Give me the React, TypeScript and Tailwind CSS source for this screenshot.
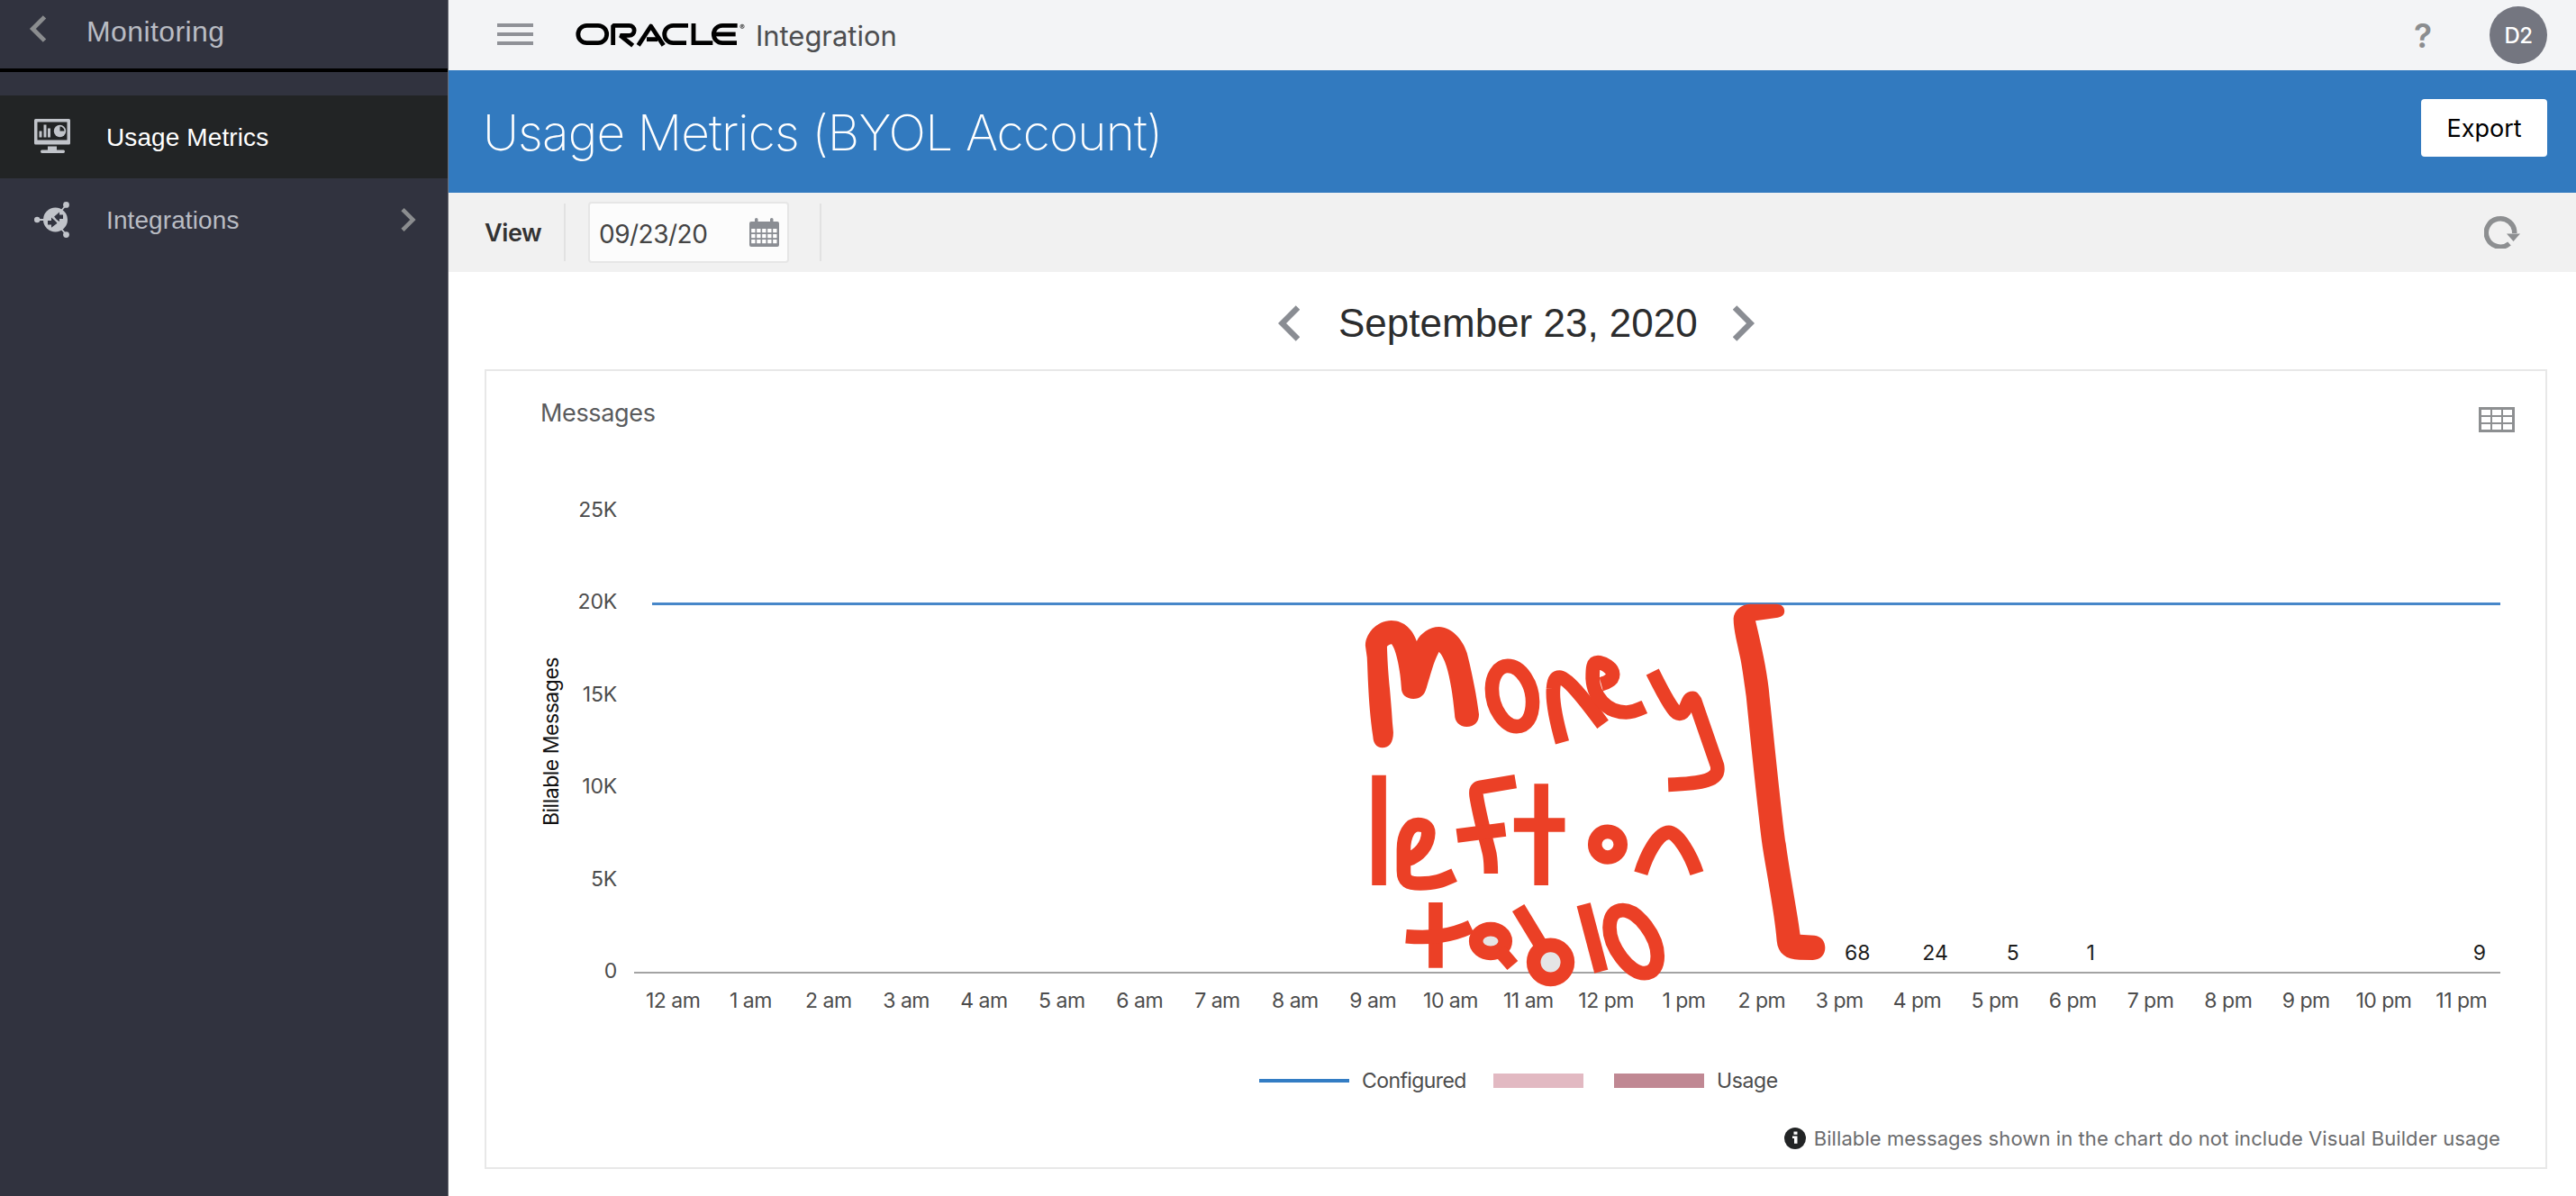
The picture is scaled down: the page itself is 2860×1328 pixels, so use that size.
import React from "react";

const sans = "font-['Inter','Liberation_Sans',sans-serif]";
const helv = "font-['Liberation_Sans',Arial,sans-serif]";

const hours = [
  "12 am", "1 am", "2 am", "3 am", "4 am", "5 am", "6 am", "7 am", "8 am", "9 am", "10 am", "11 am",
  "12 pm", "1 pm", "2 pm", "3 pm", "4 pm", "5 pm", "6 pm", "7 pm", "8 pm", "9 pm", "10 pm", "11 pm",
];
const usage: Record<string, number> = { "3 pm": 68, "4 pm": 24, "5 pm": 5, "6 pm": 1, "11 pm": 9 };
const ticks = ["25K", "20K", "15K", "10K", "5K", "0"];

function Chevron({ dir, className, w }: { dir: "left" | "right"; className: string; w: number }) {
  return (
    <svg viewBox="0 0 24 40" fill="none" stroke="currentColor" strokeWidth={w} className={className}>
      <path d={dir === "left" ? "M22 2.5 L4.5 20 L22 37.5" : "M2 2.5 L19.5 20 L2 37.5"} />
    </svg>
  );
}

function MonitorIcon() {
  return (
    <svg viewBox="0 0 40 40" className="h-10 w-10" fill="#c1c4ca">
      <path fillRule="evenodd" d="M1.500 0 H38.500 Q40 0 40 1.500 V27 Q40 28.500 38.500 28.500 H1.500 Q0 28.500 0 27 V1.500 Q0 0 1.500 0Z M3.500 3.500 V23.500 H36.500 V3.500Z" />
      <path d="M5.500 13.500h3v7h-3z M10.500 6.500h3v14h-3z M15 10.500h3v10h-3z" />
      <circle cx="28.500" cy="13.500" r="6.700" />
      <path d="M28.500 13.500 V8.500 A5 5 0 0 1 33.500 13.500Z" fill="#222425" />
      <path d="M15 30.500h10v4h7.500q1.500 0 1.500 1.750t-1.500 1.750h-24q-1.500 0-1.500-1.750t1.500-1.750h6.500z" />
    </svg>
  );
}

function IntegrationIcon() {
  return (
    <svg viewBox="0 0 40 40" className="h-10 w-10" fill="#c1c4ca">
      <path d="M3 20H12 M30 10L35.500 3.500 M30 30L35.500 36.500" stroke="#c1c4ca" strokeWidth="1.800" />
      <circle cx="3.200" cy="20" r="3.200" />
      <circle cx="35.500" cy="3.400" r="3.400" />
      <circle cx="35.500" cy="36.600" r="3.400" />
      <circle cx="23.500" cy="20" r="13.500" />
      <path d="M21 17.500L28 11.500V14.500H32V19H28V22L21 17.500Z M26 23.500L19 17.500V21H15V25.500H19V28.800Z" fill="#31333f" />
      <path d="M20.500 15.500L27 24.500" stroke="#c1c4ca" strokeWidth="1.600" />
    </svg>
  );
}

function OracleLogo() {
  return (
    <svg viewBox="0 0 630 180" className="h-[60px] w-[210px]" fill="none" stroke="#000" strokeWidth="14.500" role="img" aria-label="Oracle">
      <rect x="35.500" y="55" width="95.500" height="58" rx="29" />
      <path d="M152 120 V55 H206 A16.500 16.500 0 0 1 206 88 H176 L218 122" strokeLinejoin="bevel" />
      <path d="M236 121 L278 57 L320 121" strokeLinejoin="round" />
      <path d="M264 101 H300" />
      <path d="M402 55 H352 A29 29 0 0 0 352 113 H396" />
      <path d="M420 48 V113 H484" />
      <path d="M566 55 H516 A29 29 0 0 0 516 113 H564" />
      <path d="M492 84 H560" />
      <circle cx="582" cy="58" r="6.500" strokeWidth="1.800" />
      <path d="M580 62 V54.500 H583.500 V58 H580 M582.500 58L585 62" strokeWidth="1.500" />
    </svg>
  );
}

function CalendarIcon() {
  return (
    <svg viewBox="0 0 33 32" className="h-8 w-[33px]">
      <path d="M6 1.500Q6 0 7.750 0T9.500 1.500V4H23V1.500Q23 0 24.750 0T26.500 1.500V4H31Q33 4 33 6V30Q33 32 31 32H2Q0 32 0 30V6Q0 4 2 4H6Z" fill="#8a8d93" />
      {[12, 18, 24].map((y) =>
        [2.2, 8.2, 14.2, 20.2, 26.2].map((x) => <rect key={`${x}-${y}`} x={x} y={y} width="4.300" height="4.200" fill="#fff" />)
      )}
    </svg>
  );
}

function RefreshIcon() {
  return (
    <svg viewBox="0 0 40 37" className="h-[37px] w-10">
      <path d="M28 31.500 A15.700 15.700 0 1 1 33.700 20" fill="none" stroke="#8d8f91" strokeWidth="5.500" />
      <path d="M25 20.500H40L32.500 29Z" fill="#8d8f91" />
    </svg>
  );
}

function TableIcon() {
  return (
    <svg viewBox="0 0 40 28" className="mt-4 h-7 w-10">
      <path fill="#8d8f91" d="M0 0H40V28H0Z" />
      {[3, 11, 19].map((y) =>
        [3, 15, 27].map((x) => <rect key={`${x}-${y}`} x={x} y={y} width="10" height="6" fill="#fff" />)
      )}
    </svg>
  );
}

function Sidebar() {
  return (
    <aside className={`flex h-full w-[498px] shrink-0 flex-col border-r border-[#6b6d76] bg-[#31333f] ${helv}`}>
      <div className="flex h-[80px] items-start border-b-4 border-black pl-8">
        <Chevron dir="left" w={6.5} className="mt-[17px] h-[30px] w-[20px] text-[#8b8d8f]" />
        <span className="ml-[44px] text-[32px] leading-[70px] tracking-[0.400px] text-[#b9bcc3]">Monitoring</span>
      </div>
      <div className="mt-[26px] flex h-[92px] items-center bg-[#222425] pl-[38px]">
        <MonitorIcon />
        <span className="ml-[40px] pt-0.5 text-[28px] tracking-[0.100px] text-white">Usage Metrics</span>
      </div>
      <div className="flex h-[92px] items-center pl-[38px]">
        <IntegrationIcon />
        <span className="ml-[40px] pt-0.5 text-[28px] tracking-[0.100px] text-[#b9bcc3]">Integrations</span>
        <Chevron dir="right" w={7} className="ml-auto mr-[35px] h-[26px] w-[17px] text-[#8b8d8f]" />
      </div>
    </aside>
  );
}

function Header() {
  return (
    <header className="flex h-[78px] items-center bg-[#f3f4f6]">
      <div className="ml-[54px] flex w-10 flex-col gap-[6px] pb-[2px]">
        <i className="h-1 bg-[#8f9197]" />
        <i className="h-1 bg-[#8f9197]" />
        <i className="h-1 bg-[#8f9197]" />
      </div>
      <div className="ml-[38px] pt-px"><OracleLogo /></div>
      <span className="ml-[-1px] pt-[3px] text-[31px] tracking-[-0.040px] text-[#4d4e50]">Integration</span>
      <span className="ml-auto pt-px text-[37px] font-semibold leading-none text-[#8b8d8f]">?</span>
      <span className="ml-[64px] mr-8 flex h-16 w-16 items-center justify-center rounded-full bg-[#747680] pt-0.5 text-[24px] font-medium tracking-[-0.500px] text-white">D2</span>
    </header>
  );
}

function TitleBar() {
  return (
    <div className="flex h-[136px] items-start justify-between bg-[#327abf] pl-[38px] pr-8">
      <h1 className="pt-px text-[55px] font-extralight leading-[136px] tracking-[-0.870px] text-white">Usage Metrics (BYOL Account)</h1>
      <button className="mt-8 h-16 w-[140px] rounded bg-white pt-0.5 text-center text-[27px] text-black">Export</button>
    </div>
  );
}

function Toolbar() {
  return (
    <div className="flex h-[88px] items-center bg-[#f1f1f1] pl-[40px]">
      <span className="w-[88px] pt-0.5 text-[27px] font-semibold tracking-[-0.400px] text-[#333]">View</span>
      <i className="h-16 w-0.5 bg-[#e2e2e2]" />
      <div className="ml-[25px] flex h-[68px] w-[223px] items-center justify-between rounded border-2 border-[#e6e6e6] bg-[#fcfcfc] pl-[10px] pr-[9px]">
        <span className="pt-1 text-[28px] tracking-[-0.500px] text-[#444]">09/23/20</span>
        <CalendarIcon />
      </div>
      <i className="ml-[34px] h-16 w-0.5 bg-[#e2e2e2]" />
      <span className="ml-auto mr-[62px] pb-px"><RefreshIcon /></span>
    </div>
  );
}

/* Freehand marker annotation drawn over the chart */
function Annotation() {
  return (
    <svg
      viewBox="0 0 1568 1380"
      preserveAspectRatio="none"
      className="pointer-events-none absolute left-[940px] top-[146px] h-[460px] w-[580px] overflow-visible"
      fill="none"
      stroke="#eb4026"
      strokeWidth="15.600"
      strokeLinejoin="round"
    >
      <g fill="#eb4026" stroke="none">
        <path d="M97 200C97 160 132 117 175 117C215 117 240 150 251 186C262 160 290 138 318 138C355 138 390 180 402 225C415 280 430 360 438 430C438 455 425 471 401 471C380 471 365 455 365 430C358 350 345 250 318 221C300 260 295 290 280 343C275 365 262 378 241 378C220 378 205 365 205 340C203 290 190 215 176 196C172 196 162 200 162 206C165 300 170 330 176 420Q178 460 181 490C181 525 168 541 148 541C130 541 121 525 120 505C105 390 105 300 102 240Z" />
        <path d="M1202 110C1203 85 1225 63 1250 62L1330 62C1348 62 1355 75 1355 85C1355 98 1348 105 1335 107L1268 118C1290 220 1305 300 1310 370C1320 470 1345 750 1359 860C1370 950 1392 1080 1402 1163L1445 1166C1465 1168 1477 1185 1477 1207C1477 1230 1465 1247 1440 1248L1400 1247C1360 1247 1335 1225 1332 1185C1325 1090 1300 950 1289 870C1275 750 1250 480 1240 370C1235 330 1228 270 1222 240C1215 200 1202 150 1202 110Z" />
      </g>
      <g fill="#e5e5e5" stroke="none">
        <ellipse cx="473" cy="1185" rx="30" ry="24" />
        <ellipse cx="653" cy="1255" rx="40" ry="45" />
      </g>
      <g>
        {[
          "M477 345C477 305 495 268 524 268C565 268 599 330 599 388C599 440 580 470 551 470C515 470 477 410 477 345Z",
          "M688 523C672 460 658 390 661 345C662 320 668 306 680 306C700 306 745 365 810 463",
          "M805 329C825 323 840 312 840 296C840 276 812 257 795 257C780 257 779 275 779 310C782 370 820 423 880 423C900 423 915 415 935 405",
          "M959 288C980 335 1000 380 1020 410C1035 435 1050 432 1060 405C1066 390 1068 376 1080 376L1086 385L1153 600C1162 650 1110 660 1006 664",
          "M138 632V999",
          "M222 914C260 900 285 865 286 825C286 805 273 797 255 797C230 797 212 830 212 880V950C212 985 225 993 262 993C305 993 325 985 364 965",
          "M548 653L440 673C432 676 428 684 430 700C440 770 458 840 470 895C474 920 474 940 474 960",
          "M372 834L517 813",
          "M625 661V999",
          "M543 798H696",
          "M786 863A38.500 43 0 1 1 863 863A38.500 43 0 1 1 786 863Z",
          "M924 959C940 900 975 823 1008 823C1035 823 1075 900 1092 959",
          "M308 1056V1274",
          "M219 1169C290 1176 350 1170 414 1137",
          "M429 1185A44 40 0 1 1 517 1185A44 40 0 1 1 429 1185Z",
          "M500 1216L539 1266",
          "M556 1074L622 1195",
          "M602 1255A51 57 0 1 1 704 1255A51 57 0 1 1 602 1255Z",
          "M752 1063L805 1286",
          "M830 1140C830 1100 845 1082 870 1082C915 1082 974 1170 974 1235C974 1270 960 1292 935 1292C890 1292 830 1205 830 1140Z",
        ].map((d) => (
          <path key={d} d={d} vectorEffect="non-scaling-stroke" />
        ))}
      </g>
    </svg>
  );
}

function Chart() {
  return (
    <div className="relative flex h-[637px] pr-[50px]">
      <div className="ml-[48px] flex w-[48px] items-center justify-center">
        <span className="mt-0.5 rotate-180 whitespace-nowrap text-[23px] leading-[48px] tracking-[-0.480px] text-[#111] [writing-mode:vertical-rl]">Billable Messages</span>
      </div>
      <div className="mt-[10.500px] flex w-[49px] flex-col text-right text-[23px] tracking-[-0.200px] text-[#4c4c4c]">
        {ticks.map((t) => (
          <span key={t} className="h-[102.500px] leading-[102.500px]">{t}</span>
        ))}
      </div>
      <div className="ml-[19px] flex flex-1 flex-col">
        <div className="flex h-[577px] flex-col justify-end border-b-2 border-[#a3a3a3]">
          <div className="ml-5 h-[3px] w-[2052px] bg-[#4787c9]" />
          <div className="-mr-5 mb-[3px] ml-5 mt-[368px] grid grid-cols-24 text-center text-[23px] leading-9 text-[#1c1c1c]">
            {hours.map((h) => (
              <span key={h}>{usage[h] ?? "\u00a0"}</span>
            ))}
          </div>
        </div>
        <div className="grid h-[60px] grid-cols-24 items-center text-center text-[23px] tracking-[-0.500px] text-[#4c4c4c]">
          {hours.map((h) => (
            <span key={h} className="whitespace-nowrap">{h}</span>
          ))}
        </div>
      </div>
      <Annotation />
    </div>
  );
}

function Legend() {
  return (
    <div className="mt-[9px] flex h-[100px] items-center pl-[858px] text-[23px] text-[#4c4c4c]">
      <i className="h-1 w-[100px] bg-[#337dc4]" />
      <span className="ml-[14px] w-[146px] pt-px tracking-[-0.600px]">Configured</span>
      <i className="h-4 w-[100px] bg-[#e2b9c2]" />
      <i className="ml-[34px] h-4 w-[100px] bg-[#c08893]" />
      <span className="ml-[14px] pt-px tracking-[-0.400px]">Usage</span>
    </div>
  );
}

function InfoIcon() {
  return (
    <svg viewBox="0 0 24 24" className="h-6 w-6">
      <circle cx="12" cy="12" r="12" fill="#222425" />
      <path d="M10.500 4.500h4v3.300h-4z M9 9.500h5.500v8.200h-3.500v-5.700h-2z" fill="#fff" />
    </svg>
  );
}

export default function App() {
  return (
    <div className={`flex h-[1328px] w-[2860px] overflow-hidden bg-white ${sans}`}>
      <Sidebar />
      <main className="flex flex-1 flex-col">
        <Header />
        <TitleBar />
        <Toolbar />
        <div className={`flex h-[108px] items-center pl-[921px] pt-[6px] ${helv}`}>
          <Chevron dir="left" w={6.5} className="h-10 w-6 text-[#8a8d93]" />
          <span className="ml-[43px] w-[399px] whitespace-nowrap text-[44px] text-[#2b2c2d]">September 23, 2020</span>
          <Chevron dir="right" w={6.5} className="ml-[39px] h-10 w-6 text-[#8a8d93]" />
        </div>
        <section className="ml-10 h-[888px] w-[2290px] border-2 border-[#e8e8e8]">
          <div className="flex h-[92px] items-center justify-between pl-[60px] pr-[34px]">
            <h2 className="pt-0.5 text-[27px] tracking-[-0.350px] text-[#5a5b5d]">Messages</h2>
            <TableIcon />
          </div>
          <Chart />
          <Legend />
          <div className="flex h-7 items-center justify-end gap-[9px] pr-[50px] text-[22px] tracking-[0.090px] text-[#6b6c6e]">
            <InfoIcon />
            <span>Billable messages shown in the chart do not include Visual Builder usage</span>
          </div>
        </section>
      </main>
    </div>
  );
}
